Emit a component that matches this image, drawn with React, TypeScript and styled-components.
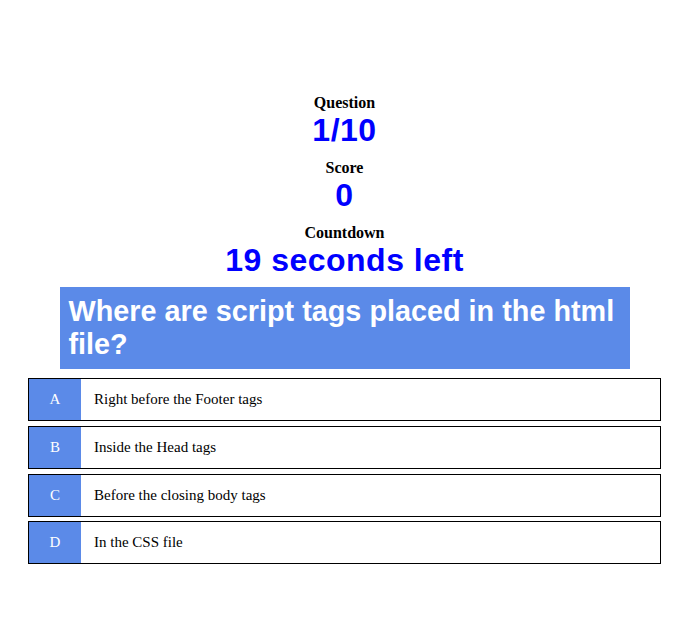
import React from "react";
import styled, { createGlobalStyle } from "styled-components";

const GlobalStyle = createGlobalStyle`
  html, body { margin: 0; padding: 0; background: #ffffff; }
  body { margin: 8px; font-family: "Liberation Serif", "Times New Roman", serif; }
`;

const BLUE = "#5b8ae8";

const Page = styled.div`
  width: 633px;
  margin-left: 20px;
  padding-top: 86px;
  display: flex;
  flex-direction: column;
`;

const Stats = styled.div`
  display: flex;
  flex-direction: column;
  align-items: center;
  gap: 9.5px;
`;

const Stat = styled.div`
  display: flex;
  flex-direction: column;
  align-items: center;
`;

const Label = styled.div`
  font-family: "Liberation Serif", "Times New Roman", serif;
  font-weight: bold;
  font-size: 16px;
  line-height: 18.4px;
  color: #000;
`;

const Value = styled.div`
  font-family: "Liberation Sans", Arial, sans-serif;
  font-weight: bold;
  font-size: 32px;
  line-height: 37px;
  letter-spacing: 0.5px;
  color: #0000ff;
`;

const QuestionBox = styled.div`
  margin: 8px auto 0;
  width: 570px;
  box-sizing: border-box;
  padding: 8px 8px 8px 9px;
  background: ${BLUE};
  color: #fff;
  font-family: "Liberation Sans", Arial, sans-serif;
  font-weight: bold;
  font-size: 28.8px;
  line-height: 33px;
`;

const Options = styled.div`
  margin-top: 9px;
  display: flex;
  flex-direction: column;
  gap: 4.7px;
`;

const Option = styled.div`
  display: flex;
  align-items: stretch;
  height: 43px;
  box-sizing: border-box;
  border: 1px solid #000;
  background: #fff;
  cursor: pointer;
`;

const Letter = styled.div`
  width: 52px;
  flex: none;
  background: ${BLUE};
  color: #fff;
  display: flex;
  align-items: center;
  justify-content: center;
  font-family: "Liberation Serif", "Times New Roman", serif;
  font-size: 15px;
`;

const OptionText = styled.div`
  display: flex;
  align-items: center;
  padding-left: 13px;
  font-family: "Liberation Serif", "Times New Roman", serif;
  font-size: 15px;
  color: #000;
`;

const options = [
  { key: "A", text: "Right before the Footer tags" },
  { key: "B", text: "Inside the Head tags" },
  { key: "C", text: "Before the closing body tags" },
  { key: "D", text: "In the CSS file" },
];

export default function App() {
  return (
    <>
      <GlobalStyle />
      <Page>
        <Stats>
          <Stat>
            <Label>Question</Label>
            <Value>1/10</Value>
          </Stat>
          <Stat>
            <Label>Score</Label>
            <Value>0</Value>
          </Stat>
          <Stat>
            <Label>Countdown</Label>
            <Value>19 seconds left</Value>
          </Stat>
        </Stats>
        <QuestionBox>Where are script tags placed in the html file?</QuestionBox>
        <Options>
          {options.map((o) => (
            <Option key={o.key}>
              <Letter>{o.key}</Letter>
              <OptionText>{o.text}</OptionText>
            </Option>
          ))}
        </Options>
      </Page>
    </>
  );
}
